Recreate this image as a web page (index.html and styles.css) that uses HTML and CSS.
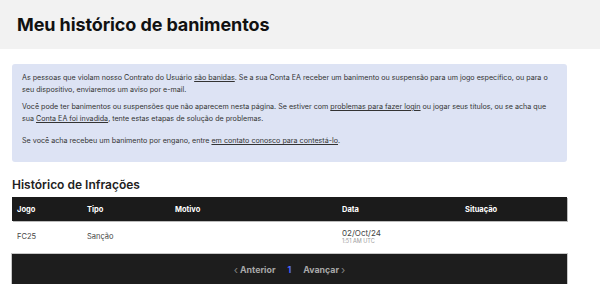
FILE: index.html
```html
<!DOCTYPE html>
<html lang="pt-BR">
<head>
<meta charset="utf-8">
<title>Meu histórico de banimentos</title>
<link rel="stylesheet" href="styles.css">
</head>
<body>
<header class="page-header">
  <h1 class="page-title">Meu histórico de banimentos</h1>
</header>
<main class="content">
  <section class="notice">
    <p>As pessoas que violam nosso Contrato do Usuário <a href="#">são banidas</a>. Se a sua Conta EA receber um banimento ou suspensão para um jogo específico, ou para o seu dispositivo, enviaremos um aviso por e-mail.</p>
    <p>Você pode ter banimentos ou suspensões que não aparecem nesta página. Se estiver com <a href="#">problemas para fazer login</a> ou jogar seus títulos, ou se acha que sua <a href="#">Conta EA foi invadida</a>, tente estas etapas de solução de problemas.</p>
    <p class="last">Se você acha recebeu um banimento por engano, entre <a href="#">em contato conosco para contestá-lo</a>.</p>
  </section>
  <h2 class="section-title">Histórico de Infrações</h2>
  <div class="table">
    <div class="row head">
      <div class="c c1">Jogo</div>
      <div class="c c2">Tipo</div>
      <div class="c c3">Motivo</div>
      <div class="c c4">Data</div>
      <div class="c c5">Situação</div>
    </div>
    <div class="row body">
      <div class="c c1">FC25</div>
      <div class="c c2">Sanção</div>
      <div class="c c3"></div>
      <div class="c c4"><div class="date">02/Oct/24</div><div class="time">1:51 AM UTC</div></div>
      <div class="c c5"></div>
    </div>
  </div>
  <nav class="pager">
    <span class="pg prev"><span class="chev">&lsaquo;</span> Anterior</span>
    <span class="pg num">1</span>
    <span class="pg next">Avançar <span class="chev">&rsaquo;</span></span>
  </nav>
</main>
</body>
</html>
```
FILE: styles.css
```css
* { box-sizing: border-box; }
html, body { margin: 0; padding: 0; background: #fff; }
body { font-family: Inter, "Liberation Sans", sans-serif; color: #222; }

.page-header {
  background: #f2f2f2;
  height: 49px;
  padding: 0 17px;
  display: flex;
  align-items: center;
}
.page-title {
  margin: 0;
  font-size: 18px;
  font-weight: 700;
  letter-spacing: -0.1px;
  color: #111;
}

.content { padding: 15px 33px 0 12px; }

.notice {
  background: #dde3f4;
  border-radius: 3px;
  padding: 8px 10px 10px 10px;
  height: 98px;
  font-size: 7.15px;
  line-height: 12px;
  color: #333;
}
.notice p { margin: 0 0 5px 0; }
.notice p.last { margin-top: 10px; }
.notice a { color: #333; text-decoration: underline; }

.section-title {
  margin: 15px 0 0 0;
  font-size: 12px;
  font-weight: 600;
  color: #222;
  height: 20px;
  line-height: 16px;
}

.table { width: 555px; }
.row { display: flex; }
.row.head {
  background: #1b1b1b;
  color: #fff;
  height: 24px;
  align-items: center;
  font-size: 7.5px;
  font-weight: 700;
  box-shadow: 1px 1px 0 #bcbcbc;
}
.row.body {
  height: 30px;
  align-items: center;
  font-size: 7.5px;
  color: #444;
}
.c { padding-left: 5px; }
.c1 { width: 70px; }
.c2 { width: 88px; }
.c3 { width: 167px; }
.c4 { width: 123px; }
.c5 { flex: 1; }
.date { font-size: 8px; color: #444; line-height: 9px; margin-top: 2px; }
.time { font-size: 5.5px; color: #999; line-height: 7px; }

.pager {
  width: 555px;
  height: 30px;
  margin-top: 3px;
  background: #1d1d1d;
  box-shadow: 0 0 0 1px #c8c8c8;
  display: flex;
  align-items: center;
  justify-content: center;
  gap: 12px;
  font-size: 8.8px;
  font-weight: 700;
  color: #a8a8a8;
}
.pg.num { color: #5068ff; }
.chev { font-weight: 400; font-size: 11px; color: #808080; position: relative; top: 0.5px; }
```
